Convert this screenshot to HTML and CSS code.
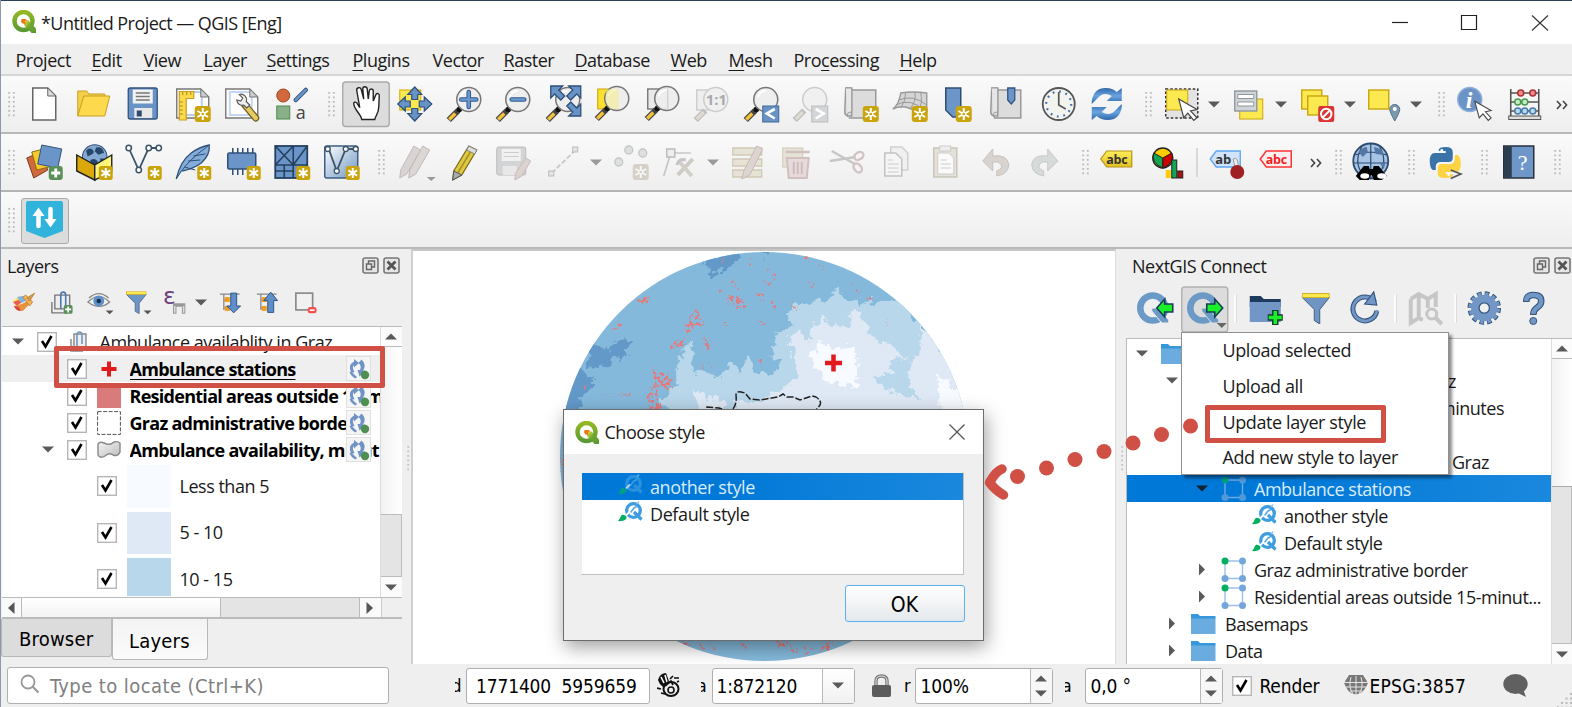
FILE: index.html
```html
<!DOCTYPE html>
<html lang="en">
<head>
<meta charset="utf-8">
<title>*Untitled Project — QGIS [Eng]</title>
<link rel="stylesheet" href="styles.css">
</head>
<body>
<svg class="defs" width="0" height="0">
  <defs>
    <linearGradient id="gq" x1="0" y1="0" x2="0" y2="1"><stop offset="0" stop-color="#93b923"/><stop offset="1" stop-color="#5a9a34"/></linearGradient>
    <linearGradient id="gt" x1="0" y1="0" x2="1" y2="1"><stop offset="0" stop-color="#f0e64a"/><stop offset=".45" stop-color="#6fa52f"/><stop offset="1" stop-color="#5a9a34"/></linearGradient>
    <linearGradient id="gg" x1="0" y1="0" x2="1" y2="1"><stop offset="0" stop-color="#f4f4f4"/><stop offset="1" stop-color="#bdbdbd"/></linearGradient>
    <linearGradient id="gb" x1="0" y1="0" x2="1" y2="1"><stop offset="0" stop-color="#fff"/><stop offset="1" stop-color="#6d96c3"/></linearGradient>
    <linearGradient id="gy" x1="0" y1="0" x2="0" y2="1"><stop offset="0" stop-color="#fdec5a"/><stop offset="1" stop-color="#e3c224"/></linearGradient>
    <linearGradient id="gr" x1="0" y1="0" x2="0" y2="1"><stop offset="0" stop-color="#2f66a8"/><stop offset=".5" stop-color="#6aa5e0"/><stop offset="1" stop-color="#2f66a8"/></linearGradient>
  </defs>
  <symbol id="grip" viewBox="0 0 8 26"><path d="M1.2 1v25M5.800 1v25" stroke="#b9b9b9" stroke-width="1.800" stroke-dasharray="1.800 2.700"/></symbol>
  <symbol id="tri" viewBox="0 0 12 7"><path d="M0 .5h12L6 6.500z" fill="currentColor"/></symbol>
  <symbol id="more" viewBox="0 0 12 10"><path d="M1 1l3.600 4L1 9M7 1l3.600 4L7 9" fill="none" stroke="#444" stroke-width="1.600"/></symbol>
  <symbol id="star" viewBox="-8 -8 16 16" overflow="visible"><rect x="-8" y="-8" width="16" height="16" rx="3" fill="#c9a40c"/><path d="M0-6V6M-5.400-3L5.400 3M-5.400 3L5.400-3" stroke="#fff" stroke-width="2"/><circle r="2.600" fill="#fff"/><circle r="1.300" fill="#c9a40c"/></symbol>
  <symbol id="ast" viewBox="-8 -8 16 16" overflow="visible"><rect x="-7" y="-7" width="14" height="14" rx="2.500" fill="#c9a40c"/><path d="M0-5V5M-4.400-2.600L4.400 2.600M-4.400 2.600L4.400-2.600" stroke="#fff" stroke-width="2"/></symbol>
  <symbol id="lens" viewBox="-18 -18 36 36" overflow="visible"><path d="M-6.500 6.500L-16 16" stroke="#444" stroke-width="6"/><path d="M-9.500 9.500L-15.500 15.500" stroke="#f3c33c" stroke-width="3.400"/><circle cx="-5.500" cy="5.500" r="2.800" fill="#111"/><circle cx="4" cy="-4.500" r="12" fill="#ededed" fill-opacity=".88" stroke="#777" stroke-width="1.500"/><path d="M-4-7a8.500 8.500 0 0 1 8-6" stroke="#fff" stroke-width="2" fill="none"/></symbol>
  <symbol id="lens-off" viewBox="-18 -18 36 36" overflow="visible"><path d="M-6.500 6.500L-16 16" stroke="#bdbdbd" stroke-width="6"/><path d="M-8 8L-15 15" stroke="#dedbd0" stroke-width="3.400"/><circle cx="4" cy="-4.500" r="12" fill="#f0f0f0" stroke="#ccc" stroke-width="1.500"/></symbol>
  <symbol id="q" viewBox="0 0 24 23"><circle cx="11.500" cy="11" r="9" fill="none" stroke="url(#gq)" stroke-width="4.400"/><path d="M12 11.500l4-1.500 8 8.500v4.500h-4.500L12 15z" fill="url(#gt)"/><path d="M9.500 9h4.500l1 1.500-2 .5.500 3-3-.5-1.500-2z" fill="#ee7913"/></symbol>
  <symbol id="tick" viewBox="0 0 20 20"><rect x=".7" y=".7" width="18.600" height="18.600" fill="#fff" stroke="#b6b6b6" stroke-width="1.400"/><path d="M5 9l3.500 5.500L14.500 4" fill="none" stroke="#000" stroke-width="2.600"/></symbol>
  <symbol id="sync" viewBox="0 0 25 25"><rect x=".5" y=".5" width="24" height="24" fill="#f5f5f5" stroke="#e0e0e0"/><path d="M5.500 17Q1 9.500 8 5.500V3l5 4-5 4.500V9Q5.500 11 8.500 16zM12.500 7l3-3.500q5.500 5 1.500 11h2.500l-6 6-2-6.500h2.500q2-4-1.500-7z" fill="#6f93c4"/><path d="M5 15.500l6 5.500-1.500 1.500Q5 20 3.500 16z" fill="#6f93c4"/><circle cx="19" cy="19" r="4.200" fill="#4f8f50"/></symbol>
  <symbol id="undock" viewBox="0 0 17 17"><rect x="1" y="1" width="15" height="15" rx="2" fill="#e6e6e6" stroke="#777" stroke-width="1.600"/><path d="M6.500 7V4h6v6h-3M4.500 7h5v5.500h-5z" fill="none" stroke="#666" stroke-width="1.400"/></symbol>
  <symbol id="shut" viewBox="0 0 17 17"><rect x="1" y="1" width="15" height="15" rx="2" fill="#e6e6e6" stroke="#777" stroke-width="1.600"/><path d="M4.500 4.500l8 8M12.500 4.500l-8 8" stroke="#555" stroke-width="2.800"/></symbol>
  <symbol id="folder" viewBox="0 0 25 20"><path d="M0 0h7l2 2h15.500v3H0z" fill="#3598db"/><path d="M0 4.500h24.500V20H0z" fill="#6aace0"/></symbol>
  <symbol id="vec" viewBox="0 0 25 25"><path d="M4 4h17.500v17.500H4z" fill="none" stroke="#9dc0e6" stroke-width="1.400"/><circle cx="4" cy="4" r="3.500" fill="#00b060"/><circle cx="21.500" cy="4" r="3.500" fill="#74a6db"/><circle cx="4" cy="21.500" r="3.500" fill="#74a6db"/><circle cx="21.500" cy="21.500" r="3.500" fill="#74a6db"/></symbol>
  <symbol id="brush" viewBox="0 0 25 21"><circle cx="15.500" cy="9.500" r="6.800" fill="none" stroke="#3d9de0" stroke-width="3.300"/><path d="M16 11l7.500 7.500" stroke="#3d9de0" stroke-width="3.200"/><path d="M12.500 11.500l3.500-4.500 3-1.500" fill="none" stroke="#5aaae3" stroke-width="1.600"/><path d="M8 14.500l4-4" stroke="#fff" stroke-width="1.800"/><path d="M19 3l2-2.500" stroke="#8fc4ea" stroke-width="1.500"/><path d="M0 20q2-2.500 3-5t5 0q1.500 2-1 4-2.500 1.500-7 1z" fill="#00b060"/></symbol>
  <symbol id="cursor" viewBox="0 0 22 24" overflow="visible"><path d="M0 0l20 11.500-7 1.500 7 7.500-3.500 3-6.500-8-4.500 5z" fill="#fff" stroke="#444" stroke-width="1.300"/></symbol>
  <symbol id="funnel" viewBox="0 0 28 31"><path d="M0 4h28L18 16.500V31l-5.500-3.500V16.500z" fill="#6f95c4" stroke="#41607f"/><rect x=".5" y=".5" width="27" height="4" fill="#fce94f" stroke="#d0b22a"/></symbol>
  <symbol id="globe" viewBox="-18 -18 36 36"><circle r="17" fill="#86a9d3" stroke="#33537a" stroke-width="1.500"/><path d="M-12-9q5-5 9-1t-2 7-5 2zM2-13q8-2 11 7l-8 3-5-5zM-6 4q6-3 9 1t-3 9-6-3zM7 2l6 0-3 8z" fill="#26476c"/></symbol>
</svg>

<div class="window">
  <header class="titlebar">
    <svg class="logo" viewBox="0 0 24 23"><use href="#q"/></svg>
    <span class="title">*Untitled Project — QGIS [Eng]</span>
    <svg class="winbtns" viewBox="0 0 160 20"><path d="M2 10.500h16" stroke="#222" stroke-width="1.200"/><path d="M71.500 3.500h15v14h-15z" fill="none" stroke="#222" stroke-width="1.200"/><path d="M142 3.500l16 15M158 3.500l-16 15" stroke="#333" stroke-width="1.100"/></svg>
  </header>

  <nav class="menubar">
    <span>Pro<u>j</u>ect</span><span><u>E</u>dit</span><span><u>V</u>iew</span><span><u>L</u>ayer</span><span><u>S</u>ettings</span><span><u>P</u>lugins</span><span>Vect<u>o</u>r</span><span><u>R</u>aster</span><span><u>D</u>atabase</span><span><u>W</u>eb</span><span><u>M</u>esh</span><span>Pro<u>c</u>essing</span><span><u>H</u>elp</span>
  </nav>

  <div class="toolbar bar1">
    <div class="grip first"><svg><use href="#grip"/></svg></div>
    <svg class="ic" viewBox="-24.750 -28 49.500 56"><path d="M-11-16H4l8 8V16h-23z" fill="#fff" stroke="#666" stroke-width="1.500"/><path d="M4-16v8h8z" fill="#ddd" stroke="#666"/></svg>
    <svg class="ic" viewBox="-24.750 -28 49.500 56"><path d="M-16 12v-25h9l2 3h16v8" fill="#f6cf4a" stroke="#c79f22"/><path d="M-16 12l6-20h26l-5 20z" fill="#fdd94e" stroke="#c79f22"/></svg>
    <svg class="ic" viewBox="-24.750 -28 49.500 56"><rect x="-14.500" y="-16" width="29" height="31" rx="2" fill="#6893c6" stroke="#33537a" stroke-width="1.300"/><rect x="-10" y="-14.500" width="20" height="14" fill="#f2f2f2"/><path d="M-7-11H7M-7-7.500H7M-7-4H7" stroke="#777" stroke-width="1.300"/><rect x="-8.500" y="4" width="18" height="10" fill="#e8e8e8"/><rect x="-6" y="6.500" width="5" height="6" fill="#2e4a6c"/></svg>
    <svg class="ic" viewBox="-24.750 -28 49.500 56"><path d="M-16-15H8l8 8V14h-32z" fill="#fff" stroke="#777" stroke-width="1.400"/><path d="M-13-12h22v23h-22" fill="none" stroke="#b9ccf2" stroke-width="2"/><path d="M8-15v8h8z" fill="#ccc" stroke="#777"/><path d="M-13.500-12.500H1v7h-7.500V16h-7z" fill="#fcd949" stroke="#c79f22" stroke-width="1.200"/><path d="M-13-2h3M-13 2h3M-13 6h3M-13 10h3M-10-12v3M-6-12v3M-2-12v3" stroke="#a8861a"/><use href="#star" x="2" y="2" width="16" height="16"/></svg>
    <svg class="ic" viewBox="-24.750 -28 49.500 56"><path d="M-16-15H8l8 8V14h-32z" fill="#fff" stroke="#777" stroke-width="1.400"/><path d="M-12-12h22v23h-22z" fill="none" stroke="#c5d5f4" stroke-width="2"/><path d="M8-15v8h8z" fill="#ccc" stroke="#777"/><path d="M3 1L14 14" stroke="#6b5a20" stroke-width="7" stroke-linecap="round"/><path d="M4 2l10 12" stroke="#e5ca62" stroke-width="4.500" stroke-linecap="round"/><path d="M-5-4a5.500 5.500 0 0 0 7 5l3 3 3-3-3.500-3.500a5.500 5.500 0 0 0-7-7l3.500 3.500-2 3z" fill="#eee" stroke="#555" stroke-width="1.100"/></svg>
    <svg class="ic" viewBox="-24.750 -28 49.500 56"><circle cx="-8.500" cy="-8.500" r="6.500" fill="#d2693c" stroke="#a04420"/><path d="M4-4L14-14" stroke="#33537a" stroke-width="4.500" stroke-linecap="round"/><path d="M4-4L14-14" stroke="#6893c6" stroke-width="2.500" stroke-linecap="round"/><rect x="-15" y="2" width="13" height="13" fill="#89b088" stroke="#4d8a50"/><text class="glyph" x="4" y="14.500" font-size="18" fill="#444">a</text></svg>
    <div class="grip g1"><svg><use href="#grip"/></svg></div>
    <svg class="ic" viewBox="-24.750 -28 49.500 56"><rect x="-23" y="-22" width="46.500" height="44.500" rx="3" fill="#dcdcdc" stroke="#aaa" stroke-width="1.400"/><path d="M-4 15.500c-1-6-8-10-8-16 0-2 3-2 4 1l2 3-3-17c-.5-3 3.500-4 4.500-1L-2-5-3-15c0-3 4-3 4.500 0L2.500-5 3.500-13c.5-3 4-2.500 4 0V-3l2.500-6c1-2.500 4-1.500 3.500 1L13 3c0 6-3 8-4 12.500z" fill="#fff" stroke="#222" stroke-width="1.400"/></svg>
    <svg class="ic" viewBox="-24.750 -28 49.500 56"><rect x="-15" y="-14" width="21" height="20" fill="#fce94f" stroke="#d0a800"/><path d="M0-17l7 7.500H3v5h-6v-5h-4zM0 17l7-7.500H3v-5h-6v5h-4zM-17 0l7.500-7v4h5v6h-5v4zM17 0l-7.500-7v4h-5v6h5v4z" fill="#6893c6" stroke="#2e4f78" stroke-width="1.200"/></svg>
    <svg class="ic" viewBox="-24.750 -28 49.500 56"><use href="#lens" x="-18" y="-18" width="36" height="36"/><path d="M4-12v15M-3.500-4.500h15" stroke="#2f5a90" stroke-width="4.600" stroke-linecap="round"/><path d="M4-12v15M-3.500-4.500h15" stroke="#6b98cc" stroke-width="2.600" stroke-linecap="round"/></svg>
    <svg class="ic" viewBox="-24.750 -28 49.500 56"><use href="#lens" x="-18" y="-18" width="36" height="36"/><path d="M-2-4.500H10.500" stroke="#2f5a90" stroke-width="4.600" stroke-linecap="round"/><path d="M-2-4.500H10.500" stroke="#6b98cc" stroke-width="2.600" stroke-linecap="round"/></svg>
    <svg class="ic" viewBox="-24.750 -28 49.500 56"><use href="#lens" x="-18" y="-18" width="36" height="36"/><path d="M-13-18h12l-4 4 6 6-4 4-6-6-4 4zM17-18H5l4 4-6 6 4 4 6-6 4 4zM17 12H5l4-4-6-6 4-4 6 6 4-4z" fill="#6893c6" stroke="#2e4f78" stroke-width="1.300"/></svg>
    <svg class="ic" viewBox="-24.750 -28 49.500 56"><rect x="-15" y="-15" width="20" height="20" fill="#fce02e" stroke="#c79f00"/><use href="#lens" x="-18" y="-19" width="36" height="36"/><path d="M-6-14.500h12v19h-9q-6-8-3-19z" fill="#f3efa4" opacity=".7"/></svg>
    <svg class="ic" viewBox="-24.750 -28 49.500 56"><rect x="-15" y="-15" width="20" height="20" fill="#e9e9e9" stroke="#777" stroke-width="1.400"/><use href="#lens" x="-18" y="-19" width="36" height="36"/><path d="M5-14v20" stroke="#ccc"/></svg>
    <svg class="ic" viewBox="-24.750 -28 49.500 56"><rect x="-15" y="-14" width="20" height="20" fill="#eee" stroke="#ccc" stroke-width="1.400"/><use href="#lens-off" x="-18" y="-18" width="36" height="36"/><text class="glyph bold" x="-6" y="1" font-size="15" fill="#aaa">1:1</text></svg>
    <svg class="ic" viewBox="-24.750 -28 49.500 56"><use href="#lens" x="-18" y="-18" width="36" height="36"/><rect x="1" y="2" width="16" height="16" fill="#6893c6" stroke="#3f6797"/><path d="M13 5L5 9.500 13 14.500" fill="none" stroke="#fff" stroke-width="2.600"/></svg>
    <svg class="ic" viewBox="-24.750 -28 49.500 56"><use href="#lens-off" x="-18" y="-18" width="36" height="36"/><rect x="1" y="2" width="16" height="16" fill="#d3d6d9" stroke="#bbb"/><path d="M5 5l8 4.500-8 5" fill="none" stroke="#fff" stroke-width="2.600"/></svg>
    <svg class="ic" viewBox="-24.750 -28 49.500 56"><path d="M-15-16h6v28h-4q-3-1-3-4zM-9-14h24v28h-27" fill="#dcdcdc" stroke="#999" stroke-width="1.500"/><path d="M-15-16h6v24q-6 0-4 5" fill="#e6e6e6" stroke="#999"/><use href="#star" x="2" y="2" width="16" height="16"/></svg>
    <svg class="ic" viewBox="-24.750 -28 49.500 56"><path d="M-17 5q6-4 8-16 12-2 26 0v18q-12 0-18-3-8-3-16 1z" fill="#d5d5d5" stroke="#999" stroke-width="1.400"/><path d="M-11-4q14-6 28 5M-14 1q14-8 30 6M-4-12Q-4-3-9 4M5-12q2 8-4 16M11-12q2 12-2 18" stroke="#999" fill="none"/><use href="#star" x="2" y="2" width="16" height="16"/></svg>
    <svg class="ic" viewBox="-24.750 -28 49.500 56"><path d="M-14-16H1V8l-5 5h-3l-7-7z" fill="#6c96c8" stroke="#2f4d74" stroke-width="1.500"/><use href="#star" x="-4" y="2" width="16" height="16"/></svg>
    <svg class="ic" viewBox="-24.750 -28 49.500 56"><path d="M-17-16h6v28h-4q-3-1-3-4zM-11-14h23v28h-27" fill="#dcdcdc" stroke="#999" stroke-width="1.500"/><path d="M-17-16h6v24q-6 0-4 5" fill="#e6e6e6" stroke="#999"/><path d="M-1-16h7v12l-3.500 4L-1-4z" fill="#6c96c8" stroke="#2f5484" stroke-width="1.300"/></svg>
    <svg class="ic" viewBox="-24.750 -28 49.500 56"><circle r="16" fill="#f3f3f0" stroke="#555" stroke-width="1.800"/><circle r="12.500" fill="none" stroke="#3e6da8" stroke-width="2.200" stroke-dasharray="1.800 4.745"/><path d="M0-12V1l7 4" fill="none" stroke="#555" stroke-width="1.700"/></svg>
    <svg class="ic" viewBox="-24.750 -28 49.500 56"><path d="M-16-3q2-13 14-13 7 0 11 4l5-4v13H-1l5-5q-8-5-14 2l-6 6z" fill="url(#gr)"/><path d="M14 3q-2 13-14 13-7 0-11-4l-5 4V3H-1l-5 5q8 5 14-2l6-6z" fill="url(#gr)"/></svg>
    <div class="grip g2"><svg><use href="#grip"/></svg></div>
    <svg class="ic" viewBox="-24.750 -28 49.500 56"><rect x="-16" y="-15" width="32" height="29" fill="#e3e3e3" stroke="#333" stroke-width="1.500" stroke-dasharray="2.500 2"/><rect x="-15" y="-14" width="21" height="20" fill="#fce94f" stroke="#c9a40c"/><use href="#cursor" x="-3" y="-5" width="20" height="22"/></svg>
    <div class="drop d1"><svg><use href="#tri"/></svg></div>
    <svg class="ic" viewBox="-24.750 -28 49.500 56"><rect x="-9" y="-5" width="23" height="20" fill="#fce94f" stroke="#c9a40c"/><rect x="-14" y="-13" width="22" height="20" fill="#cfd4d6" stroke="#8e979e" stroke-width="1.400"/><path d="M-11-9.500H5v4h-16zM-11-2H5v4h-16z" fill="#fff" stroke="#8e979e"/></svg>
    <div class="drop d2"><svg><use href="#tri"/></svg></div>
    <svg class="ic" viewBox="-24.750 -28 49.500 56"><rect x="-16" y="-14" width="20" height="19" fill="#fce94f" stroke="#c9a40c" stroke-width="1.400"/><rect x="-10" y="-8" width="20" height="19" fill="#fce94f" stroke="#c9a40c" stroke-width="1.400"/><rect x=".5" y="2" width="16" height="16" rx="2" fill="#d93535"/><circle cx="8.500" cy="10" r="5.200" fill="none" stroke="#fff" stroke-width="2"/><path d="M5 13.500L12 6.500" stroke="#fff" stroke-width="2"/></svg>
    <div class="drop d3"><svg><use href="#tri"/></svg></div>
    <svg class="ic" viewBox="-24.750 -28 49.500 56"><rect x="-15" y="-14" width="20" height="19" fill="#fce94f" stroke="#c9a40c" stroke-width="1.400"/><path d="M11 17q-5-9-5-11.500a5 5 0 0 1 10 0Q16 8 11 17z" fill="#7a98ae" stroke="#52748e"/><circle cx="11" cy="5" r="2" fill="#fff"/></svg>
    <div class="drop d4"><svg><use href="#tri"/></svg></div>
    <div class="grip g3"><svg><use href="#grip"/></svg></div>
    <svg class="ic" viewBox="-24.750 -28 49.500 56"><circle cx="-5" cy="-4.500" r="12" fill="#6b93c6" stroke="#8fb0da" stroke-width="1.500"/><text class="info" x="-9" y="3.500" font-size="24">i</text><use href="#cursor" x="0" y="-3" width="18" height="20"/></svg>
    <svg class="ic" viewBox="-24.750 -28 49.500 56"><path d="M-14-15v27M14-15v27M-14-11h28M-14-2h28M-14 7h28" stroke="#555" stroke-width="1.600"/><rect x="-16" y="12" width="32" height="3.500" fill="#ddd" stroke="#555"/><g stroke="#a33" fill="#f08a8a" stroke-width="1.500"><circle cx="-4" cy="-11" r="3"/><circle cx="8" cy="-11" r="3"/></g><g stroke="#4a9a4f" fill="#c6ecc6" stroke-width="1.500"><circle cx="-7" cy="-2" r="3"/><circle cy="-2" r="3"/></g><g stroke="#4a7aa8" fill="#b7daf3" stroke-width="1.500"><circle cx="-7" cy="7" r="3"/><circle cx="0" cy="7" r="3"/><circle cx="8" cy="7" r="3"/></g></svg>
    <svg class="more"><use href="#more"/></svg>
  </div>

  <div class="toolbar bar2">
    <div class="grip first"><svg><use href="#grip"/></svg></div>
    <svg class="ic" viewBox="-25.750 -28 49.500 56"><path d="M-18-4l14-6 7 18-14 8z" fill="#d2693c" stroke="#7a3c1c"/><path d="M-13-10l16-4 5 18-16 4z" fill="#f6ca2c" stroke="#8a6d12"/><path d="M-3-17l20 4-4 19-20-4z" fill="#6b95c8" stroke="#33537a"/><rect x="4" y="4" width="14" height="14" rx="3" fill="#5a8f5a"/><path d="M11 6.500v9M6.500 11h9" stroke="#fff" stroke-width="2.800"/></svg>
    <svg class="ic" viewBox="-25.750 -28 49.500 56"><use href="#globe" x="-13" y="-18" width="26" height="26"/><path d="M-18-7L0 3v15l-18-9z" fill="#dba80c" stroke="#222" stroke-width="1.400"/><path d="M17-7L0 3v15l17-9z" fill="#fdf47c" stroke="#222" stroke-width="1.400"/><use href="#ast" x="3" y="3" width="16" height="16"/></svg>
    <svg class="ic" viewBox="-25.750 -28 49.500 56"><path d="M-15-14L-5 8 5-14H15" fill="none" stroke="#3c5468" stroke-width="1.800"/><g fill="#fff" stroke="#3c5468" stroke-width="1.500"><circle cx="-15" cy="-14" r="2.700"/><circle cx="-5" cy="8" r="2.700"/><circle cx="5" cy="-14" r="2.700"/><circle cx="15" cy="-14" r="2.700"/></g><use href="#ast" x="3" y="3" width="16" height="16"/></svg>
    <svg class="ic" viewBox="-25.250 -28 49.500 56"><path d="M-17 17q4-18 15-26 8-6 18-8 1 10-8 18-8 6-19 8" fill="#83acd8" stroke="#2f5078" stroke-width="1.300"/><path d="M-17 17Q-8 0 16-17M-9 5l11 3M-5-1l12-1M0-6l12-2" stroke="#2f5078" fill="none"/><use href="#ast" x="3" y="3" width="16" height="16"/></svg>
    <svg class="ic" viewBox="-25.750 -28 49.500 56"><path d="M-10-14v7M-5-14v7M0-14v7M5-14v7M10-14v7M-10 7v6M-5 7v6M0 7v6" stroke="#2f4f76" stroke-width="1.500"/><rect x="-15" y="-9" width="28" height="16" rx="1.500" fill="#6b95c8" stroke="#2f5078" stroke-width="1.500"/><use href="#ast" x="3" y="3" width="16" height="16"/></svg>
    <svg class="ic" viewBox="-25.250 -28 49.500 56"><rect x="-17" y="-16" width="32" height="32" fill="#6b95c8" stroke="#24405f" stroke-width="1.800"/><path d="M-17-16L1 3M1-16L-17 3M15-16L1 3M1-16V16M-17 3h32M-8 3v13M-17 9H1" stroke="#24405f" stroke-width="1.600" fill="none"/><use href="#ast" x="3" y="3" width="16" height="16"/></svg>
    <svg class="ic" viewBox="-25.750 -28 49.500 56"><rect x="-17" y="-16" width="33" height="32" rx="2" fill="url(#gb)" stroke="#3f5d80" stroke-width="1.500"/><path d="M-13-13L-5 9 4-13H14" fill="none" stroke="#3c5468" stroke-width="1.800"/><g fill="#fff" stroke="#3c5468" stroke-width="1.300"><circle cx="-14" cy="-13" r="2.500"/><circle cx="-5" cy="9" r="2.500"/><circle cx="4" cy="-13" r="2.500"/><circle cx="14" cy="-13" r="2.500"/></g><use href="#ast" x="3" y="3" width="16" height="16"/></svg>
    <div class="grip g4"><svg><use href="#grip"/></svg></div>
    <svg class="ic" viewBox="-24.750 -28 49.500 56"><path d="M-1-16l7 4L-8 12l-7 4 1-8z" fill="#d9d3d3" stroke="#c4bcbc"/><path d="M8-16l7 4L1 12l-7 4 1-8z" fill="#dcd6d4" stroke="#c0b8b8"/><path d="M12 15h9l-4.500 4z" fill="#999"/></svg>
    <svg class="ic" viewBox="-24.750 -28 49.500 56"><path d="M4-16l8 4L-3 13l-9 5 1-9z" fill="#e0c93e" stroke="#7a6a1a" stroke-width="1.200"/><path d="M8-14L-7 11" stroke="#a3912c" stroke-width="1.500"/><path d="M4-16l8 4-2 4-8-4z" fill="#ddd" stroke="#888"/><path d="M-11 9l8 4-9 5z" fill="#aaa" stroke="#555"/></svg>
    <svg class="ic" viewBox="-24.750 -28 49.500 56"><rect x="-17" y="-15" width="29" height="28" rx="2" fill="#d2d4d6" stroke="#bbb"/><rect x="-12" y="-13" width="19" height="12" fill="#f1f1f1"/><path d="M-10-9.500H5M-10-5.500H5" stroke="#ccc"/><rect x="-11" y="4" width="14" height="9" fill="#e8e8e8"/><path d="M12-4l5 3L8 14l-7 4 1-7z" fill="#dcd2d0" stroke="#c7bdbb"/></svg>
    <svg class="ic" viewBox="-24.750 -28 49.500 56"><path d="M-12 11L12-12" stroke="#c6c6c6" stroke-width="1.700" stroke-dasharray="5 2"/><rect x="-15" y="9" width="5" height="5" fill="#e4e4e4" stroke="#bbb"/><rect x="9" y="-15" width="5" height="5" fill="#e4e4e4" stroke="#bbb"/></svg>
    <div class="drop e1"><svg><use href="#tri"/></svg></div>
    <svg class="ic" viewBox="-24.750 -28 49.500 56"><g fill="#dde0dd" stroke="#c2c6c2" stroke-width="1.300"><circle cx="-2" cy="-12" r="4"/><circle cx="12" cy="-9" r="4"/><circle cx="-12" cy="0" r="4"/></g><g class="faded"><use href="#star" x="2" y="2" width="16" height="16"/></g></svg>
    <svg class="ic" viewBox="-24.750 -28 49.500 56"><path d="M-10-9l-7 23M-10-9h20" stroke="#c6c6c6" stroke-width="1.700"/><rect x="-14" y="-13" width="8" height="8" fill="#eee" stroke="#bbb" stroke-width="1.500"/><path d="M12-3L-3 13" stroke="#cecbc4" stroke-width="4"/><path d="M-2-1l13 15" stroke="#d2cfc8" stroke-width="4"/><path d="M-4 3q2-7 9-5" stroke="#c4c4c4" stroke-width="3" fill="none"/></svg>
    <div class="drop e2"><svg><use href="#tri"/></svg></div>
    <svg class="ic" viewBox="-24.750 -28 49.500 56"><path d="M-15-14h29v7h-29zM-15-3h29v7h-29zM-15 8h29v7h-29z" fill="#e6e3d6" stroke="#cfc9b4" stroke-width="1.300"/><path d="M9-16l6 3L2 13l-8 4 2-8z" fill="#ddd4d2" stroke="#c5bcba"/></svg>
    <svg class="ic" viewBox="-24.750 -28 49.500 56"><rect x="-15" y="-14" width="20" height="19" fill="#e6e3d6" stroke="#cfc9b4"/><path d="M-12-10h24" stroke="#d2bfc0" stroke-width="2.500"/><path d="M-11-4h22l-2 20H-9z" fill="#e6dadb" stroke="#d2bfc0" stroke-width="2"/><path d="M-4 0v12M0 0v12M4 0v12" stroke="#cdb8ba" stroke-width="1.800"/></svg>
    <svg class="ic" viewBox="-24.750 -28 49.500 56"><path d="M-15-11L8 2M-17-1L9-5" stroke="#c6c6c6" stroke-width="2.400"/><ellipse cx="12" cy="-6" rx="5" ry="3.500" fill="none" stroke="#d2c3c5" stroke-width="2.400" transform="rotate(-30 12 -6)"/><ellipse cx="11" cy="6" rx="5" ry="3.500" fill="none" stroke="#d2c3c5" stroke-width="2.400" transform="rotate(50 11 6)"/></svg>
    <svg class="ic" viewBox="-24.750 -28 49.500 56"><path d="M-6-15H5l6 6V8H-6z" fill="#f0f0f0" stroke="#cfcfcf" stroke-width="1.500"/><path d="M-12-9H-1l6 6v17h-17z" fill="#f5f5f5" stroke="#c2c2c2" stroke-width="1.500"/><path d="M-9-2h5M-9 2H2M-9 6H2M-9 10H2" stroke="#ccc"/></svg>
    <svg class="ic" viewBox="-24.750 -28 49.500 56"><rect x="-12" y="-14" width="23" height="29" fill="#e4e1d8" stroke="#c9c5b8" stroke-width="1.500"/><path d="M-8-9H3l5 5v16H-8z" fill="#fafafa" stroke="#ccc"/><rect x="-6" y="-16" width="11" height="5" fill="#eee" stroke="#ccc"/><path d="M-5-2h6M-5 2H5M-5 6H5" stroke="#ccc"/></svg>
    <svg class="ic" viewBox="-24.750 -28 49.500 56"><path d="M-13-1L-3-13v7q14-2 16 8 0 10-12 12v-5q7-3 4-7-2-3-8-2v9z" fill="#d9d3cf" stroke="#c9c2bd"/></svg>
    <svg class="ic" viewBox="-24.750 -28 49.500 56"><path d="M13-1L3-13v7q-14-2-16 8 0 10 12 12v-5q-7-3-4-7 2-3 8-2v9z" fill="#d6dad8" stroke="#c5c9c7"/></svg>
    <div class="grip g5"><svg><use href="#grip"/></svg></div>
    <svg class="ic" viewBox="-24.750 -28 49.500 56"><path d="M-15-3l6-8h25V5H-9z" fill="url(#gy)" stroke="#b3941a" stroke-width="1.200"/><text class="glyph bold" x="-9.500" y="1.500" font-size="12.500" fill="#333">abc</text></svg>
    <svg class="ic" viewBox="-24.750 -28 49.500 56"><circle cx="-3" cy="-4" r="10" fill="#fc0" stroke="#222" stroke-width="1.300"/><path d="M-3-4l-9-5q-3 10 9 15z" fill="#13a555" stroke="#222"/><path d="M-3-4l9-5q4 10-9 15z" fill="#c00" stroke="#222"/><rect x="0" y="8" width="5" height="8" fill="#fc0"/><rect x="6" y="-2" width="5" height="18" fill="#13a555" stroke="#222"/><rect x="12" y="9" width="5" height="7" fill="#a11" stroke="#222"/></svg>
    <div class="sep s1"></div>
    <svg class="ic" viewBox="-24.250 -28 49.500 56"><path d="M-16-3l6-8h24V5h-24z" fill="#cfe4fb" stroke="#5da4ee" stroke-width="1.300"/><text class="glyph bold" x="-11" y="2" font-size="13" fill="#333">ab</text><path d="M7-3q3-2 4 1l2 9H9z" fill="#eee" stroke="#999"/><circle cx="11" cy="10" r="7" fill="#a02124"/></svg>
    <svg class="ic" viewBox="-23.250 -28 49.500 56"><path d="M-15-3l6-8h25V5H-9z" fill="#fee" stroke="#f33" stroke-width="1.500"/><text class="glyph bold" x="-9.500" y="1.500" font-size="12.500" fill="#e22">abc</text></svg>
    <svg class="more m2"><use href="#more"/></svg>
    <div class="grip g6"><svg><use href="#grip"/></svg></div>
    <svg class="ic" viewBox="-24.750 -28 49.500 56"><circle cy="-1" r="17.500" fill="#a8c4e4" stroke="#2d4b70" stroke-width="1.800"/><path d="M0-18V16M-16-7q16-6 32 0M-17 1H17M-9-15q-8 14 0 26M9-15q8 14 0 26" fill="none" stroke="#2d4b70" stroke-width="1.200"/><path d="M-12-10q4-5 8-5l1 5-5 5zM3-15q9 1 10 8l-8-1zM9 1l6-1-2 7z" fill="#5478a6"/><path d="M-7 4h5l1 3h3l1-3h5l8 10-5 4H3l-2-5h-1l-2 5h-9l-4-4z" fill="#000"/><ellipse cx="-6" cy="14" rx="4.500" ry="2.800" fill="#fff"/><ellipse cx="11" cy="14" rx="4.500" ry="2.800" fill="#fff"/></svg>
    <div class="grip g7"><svg><use href="#grip"/></svg></div>
    <svg class="ic" viewBox="-24.750 -28 49.500 56"><path d="M0-15q7 0 7 5v6q0 4-4 4h-8q-5 0-5 5v3h-3q-3-2-3-9 0-8 5-8H0v-2h-7v-1q0-3 7-3z" fill="#3973a8"/><path d="M-1 16q-7 0-7-4V6q0-4 4-4h8q5 0 5-5v-4h3q3 2 3 9 0 7-4 8H0v2h7v1q0 3-8 3z" fill="#fdd243"/><circle cx="-4" cy="-11.500" r="1.400" fill="#fff"/><circle cx="3" cy="12.500" r="1.400" fill="#fff"/><path d="M5 8l10 4-10 4.500" fill="none" stroke="#555" stroke-width="1.800"/></svg>
    <div class="grip g8"><svg><use href="#grip"/></svg></div>
    <svg class="ic" viewBox="-24.750 -28 49.500 56"><rect x="-14" y="-16" width="30" height="32" fill="#6f96c8" stroke="#27313d" stroke-width="1.500"/><rect x="-14" y="-16" width="8" height="32" fill="#2c3e50"/><text class="serif" x="0" y="8" font-size="22" fill="#fff">?</text></svg>
    <div class="grip g9"><svg><use href="#grip"/></svg></div>
  </div>

  <div class="toolbar bar3">
    <div class="grip first"><svg><use href="#grip"/></svg></div>
    <div class="connect"><svg viewBox="0 0 37 37"><path d="M0 2q0-2 2-2h33q2 0 2 2v28l-18.500 7L0 30z" fill="#31b4dc"/><path d="M12.500 25V13M24.500 8v12" stroke="#fff" stroke-width="4.500" stroke-linecap="round"/><path d="M6.500 15l6-8.500 6 8.500zM18.500 18l6 8.500 6-8.500z" fill="#fff"/></svg></div>
  </div>

  <main class="work">
    <section class="panel left">
      <div class="head"><span>Layers</span><svg class="hb"><use href="#undock"/></svg><svg class="hb"><use href="#shut"/></svg></div>
      <div class="ptools">
        <svg class="pi" viewBox="-19 -20 38 40"><path d="M-11-2l7-5 4 5-6 5z" fill="#f8e45c"/><path d="M-11-1l4 4 5-4-3-2z" fill="#ee5a50"/><path d="M-7-6l6-1 4 4-5 3z" fill="#7cb4ea"/><path d="M-10 3l8-2 8-4 1 3-8 8q-5 0-9-5z" fill="#e9913e"/><path d="M-10 3l5 1 2 4q-5 0-7-5z" fill="#d9403c"/><path d="M-1-6l3-2 7 7-3 4z" fill="#f0b45c" stroke="#b97a26" stroke-width=".8"/><path d="M3-5l8-5-5 8z" fill="#d79a4a" stroke="#b97a26" stroke-width=".8"/></svg>
        <svg class="pi" viewBox="-19 -20 38 40"><path d="M-10-1v11H6M-7-4V6H8V-8H-7z" fill="#eee" stroke="#777" stroke-width="1.400"/><path d="M-1 6v-14q0-3 2.500-3t2.500 3V4" fill="none" stroke="#4778ae" stroke-width="1.600"/><rect x="2" y="2" width="9" height="9" rx="2" fill="#5a8f5a"/><path d="M6.500 3.500v6M3.500 6.500h6" stroke="#fff" stroke-width="1.800"/></svg>
        <svg class="pi" viewBox="-20 -20 38 40"><path d="M-12-1Q-1-12 10-1 0 8-12-1zM-11-5Q-1-14 9-5" fill="#eee" stroke="#888" stroke-width="1.300"/><circle cx="-1" cy="-2" r="5.500" fill="#5f8fc9"/><circle cx="-1" cy="-2" r="2.300" fill="#18304f"/><path d="M6 7.500h8l-4 4z" fill="#555"/></svg>
        <svg class="pi" viewBox="-20 -20 38 40"><use href="#funnel" x="-12" y="-12" width="21" height="23"/><path d="M6 7.500h8l-4 4z" fill="#555"/></svg>
        <svg class="pi" viewBox="-21 -20 38 40"><text class="eps" x="-13" y="1" font-size="24">ε</text><path d="M-1 11V2h9v9" fill="none" stroke="#999" stroke-width="3.500"/><path d="M-1 10V3M8 10V3" stroke="#ddd" stroke-width="1.500"/></svg>
        <div class="drop p1"><svg><use href="#tri"/></svg></div>
        <svg class="pi" viewBox="-20 -20 38 40"><path d="M-11-9H9M-7-9V7M-7-3h4M-7 5h4" stroke="#888" stroke-width="1.300"/><rect x="-6" y="-6" width="5" height="5" fill="#f29b1d"/><rect x="-6" y="3" width="5" height="5" fill="#f29b1d"/><path d="M0-10h6V3h4L3 10-4 3h4z" fill="#5f8fc9" stroke="#2e5484"/></svg>
        <svg class="pi" viewBox="-20 -20 38 40"><path d="M-11-9H9M-7-9V7M-7-3h4M-7 5h4" stroke="#888" stroke-width="1.300"/><rect x="-6" y="-6" width="5" height="5" fill="#f29b1d"/><rect x="-6" y="3" width="5" height="5" fill="#f29b1d"/><path d="M0 9.500h6v-12h4L3-11-4-2.500h4z" fill="#5f8fc9" stroke="#2e5484"/></svg>
        <svg class="pi" viewBox="-20 -20 38 40"><rect x="-10" y="-10" width="17" height="17" fill="#f1f1f1" stroke="#8a8a8a" stroke-width="1.700"/><rect x="2" y="4" width="9" height="6.500" rx="2.500" fill="#f05050"/><path d="M4 7.300h5" stroke="#fff" stroke-width="1.600"/></svg>
      </div>
      <div class="treebox">
        <div class="ltree">
          <div class="row l0"><svg class="exp"><use href="#tri"/></svg><svg class="cb"><use href="#tick"/></svg><svg class="sym" viewBox="0 0 24 22"><path d="M4 8v12h12M7 5v12h12V3H7z" fill="#eee" stroke="#888" stroke-width="1.400"/><path d="M10 15V4q0-3 2.500-3T15 4v9" fill="none" stroke="#7098c4" stroke-width="1.600"/></svg><span class="name">Ambulance availablity in Graz</span></div>
          <div class="row l1 cur"><svg class="cb"><use href="#tick"/></svg><svg class="sym" viewBox="0 0 24 24"><path d="M12 4.500v15M4.500 12h15" stroke="#e31a1c" stroke-width="4"/></svg><span class="name b"><u>Ambulance stations</u></span><svg class="sy"><use href="#sync"/></svg></div>
          <div class="row l1"><svg class="cb"><use href="#tick"/></svg><svg class="sym" viewBox="0 0 24 24"><rect width="24" height="24" fill="#d97b7b"/></svg><span class="name b">Residential areas outside 15-min</span><svg class="sy"><use href="#sync"/></svg></div>
          <div class="row l1"><svg class="cb"><use href="#tick"/></svg><svg class="sym" viewBox="0 0 24 24"><rect x=".6" y=".6" width="22.800" height="22.800" fill="#fff" stroke="#555" stroke-dasharray="4 1.500"/></svg><span class="name b">Graz administrative border</span><svg class="sy"><use href="#sync"/></svg></div>
          <div class="row l1 open"><svg class="exp"><use href="#tri"/></svg><svg class="cb"><use href="#tick"/></svg><svg class="sym" viewBox="0 0 24 24"><path d="M1 6q2-3 6-1 6 3 10-1 4-1 6 1v9q-2 5-7 3-4-3-8 1-5 3-7-1z" fill="url(#gg)" stroke="#888" stroke-width="1.400"/></svg><span class="name b">Ambulance availability, minut</span><svg class="sy"><use href="#sync"/></svg></div>
          <div class="leg"><svg class="cb"><use href="#tick"/></svg><i class="sw c1"></i><span>Less than 5</span></div>
          <div class="leg"><svg class="cb"><use href="#tick"/></svg><i class="sw c2"></i><span>5 - 10</span></div>
          <div class="leg"><svg class="cb"><use href="#tick"/></svg><i class="sw c3"></i><span>10 - 15</span></div>
        </div>
        <div class="vs"><div class="sb up"><svg><use href="#tri"/></svg></div><div class="thumb"></div><div class="track"></div><div class="sb"><svg><use href="#tri"/></svg></div></div>
      </div>
      <div class="hs"><div class="hb2"><svg viewBox="0 0 7 12"><path d="M6.500 0v12L0 6z" fill="#555"/></svg></div><div class="hthumb"></div><div class="htrack"></div><div class="hb2 r"><svg viewBox="0 0 7 12"><path d="M.5 0v12L7 6z" fill="#555"/></svg></div><div class="corner"></div></div>
      <div class="tabs"><div class="tab">Browser</div><div class="tab on">Layers</div></div>
      <svg class="splitdots s-left"><use href="#grip"/></svg>
    </section>

    <section class="canvas">
      <svg class="map" viewBox="413 251 703 410">
        <defs>
          <clipPath id="disc"><circle cx="764.500" cy="456.500" r="204.500"/></clipPath>
          <filter id="rag" x="-5%" y="-5%" width="110%" height="110%"><feTurbulence type="fractalNoise" baseFrequency=".13" numOctaves="3" seed="4"/><feDisplacementMap in="SourceGraphic" scale="15" xChannelSelector="R" yChannelSelector="G"/></filter>
          <filter id="spk" x="-5%" y="-5%" width="110%" height="110%"><feTurbulence type="fractalNoise" baseFrequency=".3" numOctaves="2" seed="9" result="n"/><feDisplacementMap in="SourceGraphic" in2="n" scale="9" xChannelSelector="R" yChannelSelector="G" result="d"/><feColorMatrix in="n" type="matrix" values="0 0 0 0 0  0 0 0 0 0  0 0 0 0 0  0 0 14 0 -6.600" result="m"/><feComposite in="d" in2="m" operator="in"/></filter>
        </defs>
        <g clip-path="url(#disc)">
          <rect x="555" y="248" width="420" height="415" fill="#85b9db"/>
          <g filter="url(#rag)">
            <path fill="#6299c9" d="M700 262l40-14-3 15-16 6-8 9-4-10zM590 340l14 10 12-8 12-2v21l-13-3-6 6-24 5zM582 371l12 8-6 14-8 4v14h-30l18-50zM762 250h8l-3 8z"/>
            <path fill="#b8d7ea" d="M688 340l9 10-6 12 3 12 13-5 10 10 8-8 7-9 9 10 7-18 5 20h22l5-14-8-5 4-20 16-9-5-14 19-12 20 1 12-12 7 10 20 6 6-5 18 3 10-2 110 120H663l7-10-10-10 17-16-1-16z"/>
            <path fill="#dfe9f5" d="M783 388l14-10-7-40 8-11 11 16 4-18 9-11 5 13 23-4 3-14 14 13 6 16 24 9 4 9 12 4 9-13-3-24 80 100H733l4-22 16 4zM693 387l14 13 13-3 5 15h-26l-2-12z"/>
            <path fill="#b8d7ea" d="M888 356l23 4-2 20 10 20-30-9-16-14 18-3zM900 312l18 16-2 24-14 3-10-13-22-8-8-16z"/>
            <path fill="#f7fbff" d="M822 343l12 6 22-3 1 42-29-6-12-12-7-14zM937 376l24 14 6 22h-26z"/>
          </g>
          <g filter="url(#spk)" fill="#e47a7c">
            <path d="M638 297l12 1 0 5-8 1zM612 330l9-8v3l-8 8zM686 325l6-10 5-7 7 20-8-4-6 8-6 0zM670 345l13-6v8l-10 2zM726 297l8-2 10 5 4 7-14 1zM730 279l7 4 2 6-6-2zM755 295l8-2 1 9-5-3zM762 281l8 0 1 6zM702 338l6 0 2 12-4-2zM651 368l8 4 14 6-3 12-12-3-1 12 5 12h-12l-2-16 6-10zM580 388l8-5-1 5zM598 394l16 0v2zM617 394l13 0v2zM768 269l9 7-2 3zM803 258l6-3v6zM817 263l10 8-5 0zM808 281l6 3-2 4zM849 281l11 11-2 2zM867 295l5 5-3 2zM789 300l11 10-4 1zM770 299l9 9-4 2zM760 321l5 2-2 3zM723 321l6 1-3 4zM747 261l6-2-1 6zM719 288l4 4-3 2zM759 359l4 2-2 3zM884 320l5 2-3 3zM721 258l4 3-3 2zM708 362l6 3-5 1zM696 367l8-4 0 4z"/>
            <path d="M680 636l10 7-3 4zM699 640l5 12-4 0zM709 641l8 8-6-1zM740 640l9 12-5-2zM774 639l13 4-6 6zM787 640l13 15-8-3zM802 645l12 5-9 5zM820 645l16-6-6 10-9 3zM653 626l16 12-5 3z"/>
            <path d="M559 450l8 22-6 0z"/>
          </g>
          <path d="M722 409l-3-1-12-1 1 4M733 409q4-5 3-14 0-4 5-3l4 1 5 6 10 1 6-1 12-2 5-3 4 3 6 0 7 3 12-4 4 1q6 4 4 8l-4 5" fill="none" stroke="#222" stroke-width="1.500" stroke-dasharray="7 2"/>
        </g>
        <path d="M833.500 354.500v17M825 363h17" stroke="#e31a1c" stroke-width="4.500"/>
      </svg>
    </section>

    <section class="panel right">
      <div class="head"><span>NextGIS Connect</span><svg class="hb"><use href="#undock"/></svg><svg class="hb"><use href="#shut"/></svg></div>
      <div class="rtools">
        <svg class="ic" viewBox="-24.750 -28 49.500 56"><circle cx="-2" cy="0" r="12.500" fill="none" stroke="#6c9ac7" stroke-width="6.500"/><path d="M-3 3v-3h6l11 12v3H7z" fill="#6c9ac7" stroke="#efefef"/><path d="M2 0l8-9v5h8v8h-8v5z" fill="#19f02a" stroke="#1b3c57" stroke-width="1.600"/></svg>
        <svg class="ic" viewBox="-24.750 -28 49.500 56"><rect x="-23" y="-21" width="46" height="45" rx="3" fill="#dcdcdc" stroke="#b0b0b0" stroke-width="1.400"/><circle cx="-2" cy="0" r="12.500" fill="none" stroke="#6c9ac7" stroke-width="6.500"/><path d="M-3 3v-3h6l11 12v3H7z" fill="#6c9ac7" stroke="#dcdcdc"/><path d="M18 0l-8-9v5H2v8h8v5z" fill="#19f02a" stroke="#1b3c57" stroke-width="1.600"/><path d="M12 15h10l-5 5z" fill="#666"/></svg>
        <div class="sep s2"></div>
        <svg class="ic" viewBox="-24.750 -28 49.500 56"><path d="M-16-12H-5l3 3h17v8h-31z" fill="#1d3b5c"/><rect x="-16" y="-6" width="31" height="20" fill="#7297c6"/><path d="M9.500 2v15M2 9.500h15" stroke="#143f2c" stroke-width="6.500"/><path d="M9.500 3v13M3 9.500h13" stroke="#19f02a" stroke-width="3.500"/></svg>
        <svg class="ic" viewBox="-24.750 -28 49.500 56"><use href="#funnel" x="-14" y="-15" width="28" height="31"/></svg>
        <svg class="ic" viewBox="-24.750 -28 49.500 56"><path d="M10-6A12 12 0 1 0 12 3" fill="none" stroke="#34567f" stroke-width="5"/><path d="M10-6A12 12 0 1 0 12.200 2" fill="none" stroke="#7297c6" stroke-width="2.800"/><path d="M9-16l3 13-12-1z" fill="#7297c6" stroke="#34567f" stroke-width="1.200"/></svg>
        <div class="sep s3"></div>
        <svg class="ic" viewBox="-24.750 -28 49.500 56"><path d="M-14-9l8-5 9 5 8-5V-1M-14-9v24l8-5V-12M-6 10l4 2M3-8V0" fill="none" stroke="#c6c6c6" stroke-width="4"/><circle cx="7" cy="6" r="5" fill="#efefef" stroke="#c6c6c6" stroke-width="3"/><path d="M11 10l6 6" stroke="#c6c6c6" stroke-width="4"/></svg>
        <div class="sep s4"></div>
        <svg class="ic" viewBox="-24.250 -28 49.500 56"><circle r="14.500" fill="none" stroke="#34567f" stroke-width="4.500" stroke-dasharray="4.600 2.992"/><circle r="14" fill="none" stroke="#7297c6" stroke-width="3.500" stroke-dasharray="3.200 4.130" stroke-dashoffset="-.6"/><circle r="9.200" fill="none" stroke="#7297c6" stroke-width="8"/><circle r="5.200" fill="#efefef" stroke="#34567f" stroke-width="1.300"/></svg>
        <svg class="ic" viewBox="-23.250 -28 49.500 56"><path d="M-7-6q0-7 7-7 8 0 8 6 0 4-4 6.500Q0 2 0 7" fill="none" stroke="#34567f" stroke-width="6.500"/><path d="M-7-7q0-6 7-6 8 0 8 6 0 4-4 6.500Q0 2 0 6" fill="none" stroke="#7297c6" stroke-width="4.300"/><circle cy="13" r="3.500" fill="#7297c6" stroke="#34567f"/></svg>
      </div>
      <div class="rbox">
        <div class="rtree">
          <div class="rrow r0"><svg class="exp"><use href="#tri"/></svg><svg class="fo"><use href="#folder"/></svg></div>
          <div class="rrow r1"><svg class="exp"><use href="#tri"/></svg><span class="tail t1">z</span></div>
          <div class="rrow"><span class="tail t2">minutes</span></div>
          <div class="rrow"></div>
          <div class="rrow"><span class="tail t3">Graz</span></div>
          <div class="rrow r2 sel"><svg class="exp"><use href="#tri"/></svg><svg class="ve"><use href="#vec"/></svg><span>Ambulance stations</span></div>
          <div class="rrow r3"><svg class="br"><use href="#brush"/></svg><span>another style</span></div>
          <div class="rrow r3"><svg class="br"><use href="#brush"/></svg><span>Default style</span></div>
          <div class="rrow r2"><svg class="exp side"><use href="#tri"/></svg><svg class="ve"><use href="#vec"/></svg><span>Graz administrative border</span></div>
          <div class="rrow r2"><svg class="exp side"><use href="#tri"/></svg><svg class="ve"><use href="#vec"/></svg><span>Residential areas outside 15-minut...</span></div>
          <div class="rrow r1"><svg class="exp side"><use href="#tri"/></svg><svg class="fo"><use href="#folder"/></svg><span>Basemaps</span></div>
          <div class="rrow r1"><svg class="exp side"><use href="#tri"/></svg><svg class="fo"><use href="#folder"/></svg><span>Data</span></div>
        </div>
        <div class="vs rvs"><div class="sb up"><svg><use href="#tri"/></svg></div><div class="thumb"></div><div class="track"></div><div class="sb"><svg><use href="#tri"/></svg></div></div>
      </div>
      <svg class="splitdots s-right"><use href="#grip"/></svg>
    </section>
  </main>

  <footer class="status">
    <div class="locate"><svg viewBox="0 0 20 20"><circle cx="8" cy="8" r="6.500" fill="none" stroke="#999" stroke-width="1.800"/><path d="M12.500 12.500l6 6" stroke="#999" stroke-width="2.200"/></svg><span>Type to locate (Ctrl+K)</span></div>
    <span class="cut k1">d</span>
    <div class="field coord">1771400&nbsp; 5959659</div>
    <svg class="bug" viewBox="0 0 24 25"><path d="M1 7q2-7 8-7l3 8-6 6q-4-3-5-7z" fill="#111"/><path d="M4 4l3 6M8 2l2 7" stroke="#fff" stroke-width="1.600"/><ellipse cx="14" cy="16" rx="7.500" ry="7" fill="#eee" stroke="#111" stroke-width="2"/><circle cx="14" cy="17" r="3" fill="none" stroke="#111" stroke-width="1.600"/><path d="M8 13l6-5 2 4M13 6l3-3M17 5h5M0 15l4 1M4 20l4 1M20 9l2-1" stroke="#111" stroke-width="1.700" fill="none"/></svg>
    <span class="cut k2">a</span>
    <div class="field scale"><span>1:872120</span><div class="cbtn"><svg><use href="#tri"/></svg></div></div>
    <svg class="lock" viewBox="0 0 19 23"><path d="M4 12V7q0-5 5.500-5T15 7v5" fill="none" stroke="#777" stroke-width="3.400"/><path d="M4 12V7q0-5 5.500-5T15 7v5" fill="none" stroke="#e8e8e8" stroke-width="1"/><rect y="11" width="19" height="12" rx="2" fill="#5c5c5c"/></svg>
    <span class="cut k3">r</span>
    <div class="field mag"><span>100%</span><div class="spin"><svg class="flip"><use href="#tri"/></svg><svg><use href="#tri"/></svg></div></div>
    <span class="cut k4">a</span>
    <div class="field rot"><span>0,0 °</span><div class="spin"><svg class="flip"><use href="#tri"/></svg><svg><use href="#tri"/></svg></div></div>
    <svg class="cb rcb"><use href="#tick"/></svg><span class="render">Render</span>
    <svg class="gl" viewBox="0 0 24 21"><path d="M5 1h14l5 8-2 4q-4 7-10 7.500Q5 20 2 13L0 9z" fill="#777"/><path d="M0 8.500h24M2 13h20M6 17h12M12 2v19M7 3q-3 10 2 17M17 3q3 10-2 17" stroke="#e8e8e8" fill="none"/></svg>
    <span class="epsg">EPSG:3857</span>
    <svg class="bubble" viewBox="0 0 25 23"><ellipse cx="12.500" cy="10" rx="12.200" ry="10" fill="#606060"/><path d="M13 18l10 5-3-8z" fill="#606060"/></svg>
    <svg class="size" viewBox="0 0 15 15"><path d="M14 1v14M9.500 5.500V15M5 10v5M.8 14v1" stroke="#bbb" stroke-width="2" stroke-dasharray="2 2.500"/></svg>
  </footer>

  <div class="frame f-layer"></div>

  <div class="popup"><div>Upload selected</div><div>Upload all</div><div>Update layer style</div><div>Add new style to layer</div></div>
  <div class="frame f-menu"></div>

  <div class="dialog">
    <div class="dhead"><svg class="logo" viewBox="0 0 24 23"><use href="#q"/></svg><span>Choose style</span><svg class="dx" viewBox="0 0 16 16"><path d="M.5.5l15 15M15.500.5l-15 15" stroke="#555" stroke-width="1.300"/></svg></div>
    <div class="dlist">
      <div class="ditem sel"><svg class="br"><use href="#brush"/></svg><span>another style</span></div>
      <div class="ditem"><svg class="br"><use href="#brush"/></svg><span>Default style</span></div>
    </div>
    <div class="dfoot"><button class="ok" type="button">OK</button></div>
  </div>

  <svg class="arrow" viewBox="980 410 220 95"><g fill="#d05045"><circle cx="1190.500" cy="426" r="7.500"/><circle cx="1161.500" cy="434.500" r="7.500"/><circle cx="1133" cy="443" r="7.500"/><circle cx="1104" cy="451.500" r="7.500"/><circle cx="1075" cy="459.500" r="7.500"/><circle cx="1046.500" cy="468" r="7.500"/><circle cx="1017.500" cy="476.500" r="7.500"/></g><path d="M1002 469q-6 2-12.500 13.500 5 7 14 12.500" fill="none" stroke="#d05045" stroke-width="9.500" stroke-linecap="round" stroke-linejoin="round"/></svg>
</div>
</body>
</html>
```
FILE: styles.css
```css
* { box-sizing: border-box; }
body { margin: 0; background: #efefef; }
svg { display: block; flex: none; }
.defs { position: absolute; }
.window {
  position: relative; width: 1572px; height: 707px; overflow: hidden;
  background: #efefef; color: #1a1a1a;
  font: 18px/27px "Open Sans", "Noto Sans", sans-serif; letter-spacing: -.48px;
  white-space: nowrap; display: flex; flex-direction: column;
}
.window::after { content: ""; position: absolute; left: 0; top: 0; width: 1px; height: 100%; background: #8b99a8; }
.titlebar { height: 44px; background: #fff; border-top: 1px solid #2c3f58; display: flex; align-items: center; padding-left: 12px; flex: none; }
.logo { width: 24px; height: 23px; }
.titlebar .logo { margin-top: -3px; }
.title { margin-left: 5px; flex: 1; letter-spacing: -.55px; padding-top: 1px; }
.winbtns { width: 160px; height: 20px; margin-right: 22px; margin-top: -1px; }
.menubar {
  height: 32px; flex: none; padding-left: 15.5px; line-height: 32px; border-bottom: 2px solid #d6d6d6;
  display: grid; grid-template-columns: 76px 52px 60px 63px 86px 80px 71px 71px 96px 58px 65px 106px 40px;
}
.menubar u { text-underline-offset: 3px; text-decoration-thickness: 1.2px; }

.toolbar { display: flex; align-items: center; flex: none; background: linear-gradient(#fafafa, #eee); }
.bar1 { height: 58px; border-bottom: 2px solid #b9b9b9; }
.bar2 { height: 58px; border-bottom: 2px solid #b4b4b4; }
.bar3 { height: 57px; border-bottom: 2px solid #b9b9b9; }
.ic { width: 49.5px; height: 56px; }
.grip { flex: none; padding-left: 12px; }
.grip svg { width: 8px; height: 26px; }
.grip.first { width: 19px; padding-left: 8px; }
.g1 { width: 24.75px; }
.g2 { width: 24.5px; }
.g3 { width: 21px; padding-left: 9px; }
.g4 { width: 24.5px; }
.g5 { width: 21.75px; }
.g6 { width: 20px; padding-left: 9px; }
.g7 { width: 25.5px; }
.g8 { width: 22px; padding-left: 10px; }
.g9 { width: 22px; }
.drop { flex: none; padding-left: 1px; color: #5a5a5a; }
.drop svg { width: 12px; height: 7px; }
.d1 { width: 17.5px; }
.d2 { width: 19.5px; }
.d3 { width: 16.5px; }
.d4 { width: 20.5px; }
.e1, .e2 { width: 18px; padding-left: 2px; color: #9a9a9a; }
.more { width: 12px; height: 10px; margin-left: 7px; margin-top: 2px; }
.m2 { margin: 2px 4px 0 9px; }
.sep { width: 2px; height: 29px; background: #d8d8d8; flex: none; }
.s1 { margin: 0 4px 0 6px; }
.connect { width: 48px; height: 46px; margin: 2px 0 0 1.5px; border: 1.5px solid #ababab; border-radius: 3px; background: #dcdcdc; display: flex; align-items: center; justify-content: center; }
.connect svg { width: 37px; height: 37px; margin-top: -2px; }
.faded { opacity: .4; filter: grayscale(.8); }
.glyph { font-family: "Open Sans", sans-serif; letter-spacing: 0; }
.bold { font-weight: 700; letter-spacing: -.2px; }
.info { font-family: "Liberation Serif", serif; font-style: italic; font-weight: 700; fill: #fff; }
.serif { font-family: "Liberation Serif", serif; }
.eps { font-family: "DejaVu Sans", sans-serif; fill: #6b3f7c; }

.work { display: grid; grid-template-columns: 411px 705px 456px; height: 412px; flex: none; }
.panel { position: relative; display: flex; flex-direction: column; min-width: 0; }
.head { height: 34px; display: flex; align-items: center; gap: 4px; }
.head span { flex: 1; padding-top: 1px; }
.hb { width: 17px; height: 17px; margin-top: -2px; }
.left .head { padding: 0 11px 0 7px; }
.right .head { padding: 0 1px 0 16px; }
.ptools { display: flex; align-items: center; height: 43px; padding: 0 0 4px 5px; }
.pi { width: 37.5px; height: 40px; }
.p1 { width: 18px; padding-left: 2px; }
.treebox { height: 271px; width: 399.5px; margin-left: 2px; border-top: 1.5px solid #bbb; background: #fff; display: flex; }
.ltree { width: 378px; height: 269px; overflow: hidden; flex: none; padding-top: 1px; }
.row { position: relative; height: 27px; display: flex; align-items: center; }
.row.l1 { padding-left: 65px; }
.row.l0 { padding-left: 10px; }
.row.open { padding-left: 40px; }
.row.cur { background: #efefef; }
.exp { width: 12px; height: 7px; color: #5a5a5a; }
.exp.side { transform: rotate(-90deg); }
.row .exp { margin-right: 13px; }
.cb { width: 20px; height: 20px; }
.row .cb { margin-right: 10px; }
.sym { width: 24px; height: 24px; margin-right: 8.500px; }
.name { overflow: hidden; flex: 1; padding-top: 1px; }
.name.b { font-weight: 700; color: #000; letter-spacing: -.72px; }
.name u { text-underline-offset: 3px; }
.sy { position: absolute; left: 344px; top: 1px; width: 25px; height: 25px; }
.leg { height: 46.5px; display: flex; align-items: center; padding-left: 95px; }
.sw { width: 43.5px; height: 42.5px; margin: 0 9px 0 10px; }
.c1 { background: #f7fbff; }
.c2 { background: #dfe9f5; }
.c3 { background: #b8d7ea; }
.vs { flex: 1; display: flex; flex-direction: column; border-left: 1px solid #ddd; color: #5a5a5a; }
.sb { height: 20px; background: #fbfbfb; display: flex; align-items: center; justify-content: center; flex: none; }
.sb svg { width: 12px; height: 7px; }
.sb.up { border-bottom: 1.5px solid #bbb; }
.sb.up svg, .flip { transform: scaleY(-1); }
.thumb { flex: 1; background: linear-gradient(90deg, #f2f2f2, #fff); }
.track { height: 63px; background: #e4e4e4; border: 1px solid #bcbcbc; border-left: 0; flex: none; }
.hs { height: 22px; width: 399.5px; margin-left: 2px; border-top: 1px solid #bbb; border-bottom: 2px solid #bbb; display: flex; }
.hb2 { width: 20px; background: #fafafa; border-right: 1.5px solid #bbb; padding: 4px 0 0 6px; }
.hb2 svg { width: 7px; height: 12px; }
.hb2.r { border-left: 1.5px solid #bbb; border-right: 0; width: 22px; }
.hthumb { width: 199px; background: linear-gradient(#fff, #f2f2f2); border-right: 1px solid #bbb; }
.htrack { flex: 1; background: #e4e4e4; }
.corner { width: 21px; border-left: 1px solid #ccc; }
.tabs { display: flex; align-items: flex-start; margin-left: 1px; font: 20px/40px "DejaVu Sans Condensed", "DejaVu Sans", sans-serif; color: #000; letter-spacing: .2px; }
.tab { width: 111px; height: 38px; padding-left: 17px; background: #dcdcdc; border: 1.5px solid #b8b8b8; border-top: 0; border-radius: 0 0 3px 3px; }
.tab.on { width: 96px; height: 41px; line-height: 44px; padding-left: 16px; background: linear-gradient(#f3f3f3, #fbfbfb); }
.splitdots { position: absolute; width: 8px; height: 26px; top: 196px; clip-path: inset(0 4px 0 0); opacity: .8; }
.s-left { left: 407px; }
.s-right { left: 5px; }

.canvas { background: #fff; border-top: 2px solid #c6c6c6; border-left: 2px solid #cfcfcf; border-right: 1px solid #ddd; }
.map { width: 703px; height: 410px; }

.rtools { height: 54px; display: flex; align-items: center; padding: 0 0 4px 14px; margin-bottom: 1px; }
.rtools .sep { background: #fbfbfb; border-right: 1px solid #ddd; width: 3px; }
.s2 { margin: 0 4px 0 5px; }
.s3 { margin: 0 3px 0 4px; }
.s4 { margin: 0 3px 0 5px; }
.rbox { flex: 1; margin-left: 10px; border-top: 1.5px solid #bbb; border-left: 1.5px solid #bbb; background: #fff; display: flex; height: 323px; min-height: 0; overflow: hidden; }
.rtree { width: 424px; flex: none; overflow: hidden; padding-top: 1px; }
.rrow { height: 27px; display: flex; align-items: center; }
.rrow span { padding-top: 1px; }
.rrow .exp { margin-right: 13px; }
.r0 { padding-left: 9px; }
.r1 { padding-left: 39px; }
.r2 { padding-left: 69px; }
.r3 { padding-left: 125px; }
.fo { width: 25px; height: 20px; margin-right: 9px; }
.ve { width: 25px; height: 25px; margin-right: 8px; }
.br { width: 25px; height: 21px; margin-right: 7px; margin-top: -3px; }
.t1 { margin-left: 257px; }
.t2 { margin-left: 312px; }
.t3 { margin-left: 325px; }
.sel { background: linear-gradient(90deg, #0078d7 35%, #1a88dd); color: #d9edff; }
.sel .exp { color: #123; }
.sel .ve, .sel .br { opacity: .7; }
.rvs .thumb { flex: none; height: 128px; border-bottom: 1px solid #aaa; }
.rvs .track { flex: 1; border-top: 0; }
.rvs .sb { width: 20px; }

.status { height: 46px; flex: none; display: flex; align-items: center; padding: 3px 0 0 7px; color: #000; font: 19px/30px "DejaVu Sans Condensed", "DejaVu Sans", sans-serif; letter-spacing: -.15px; position: relative; }
.locate { width: 382px; height: 37px; border: 1.5px solid #b0b0b0; border-radius: 3px; background: #fff; display: flex; align-items: center; padding-left: 12px; color: #808080; font-size: 20px; letter-spacing: .42px; flex: none; }
.locate svg { width: 20px; height: 20px; margin-right: 10px; margin-top: -3px; }
.cut { overflow: hidden; display: flex; justify-content: flex-end; flex: none; font-size: 18px; }
.k1 { width: 7px; margin-left: 65.5px; }
.k2 { width: 6px; margin-left: 20px; }
.k3 { width: 8px; margin-left: 12px; }
.k4 { width: 7px; margin-left: 12px; }
.field { height: 36px; border: 1.5px solid #b0b0b0; border-radius: 3px; background: #fff; display: flex; align-items: center; flex: none; padding-top: 1px; }
.coord { width: 184px; margin-left: 4px; padding-left: 9.5px; }
.bug { width: 24px; height: 25px; margin-left: 7px; }
.scale { width: 143px; margin-left: 5px; padding-left: 4px; justify-content: space-between; padding-top: 0; }
.cbtn { width: 32px; height: 100%; border-left: 1.5px solid #b8b8b8; display: flex; align-items: center; justify-content: center; background: linear-gradient(#fff, #f1f1f1); color: #5a5a5a; }
.cbtn svg { width: 12px; height: 7px; }
.lock { width: 19px; height: 23px; margin-left: 17px; }
.mag { width: 138px; margin-left: 4px; padding-left: 5px; justify-content: space-between; padding-top: 0; }
.spin { width: 22px; height: 100%; border-left: 1.5px solid #b8b8b8; display: flex; flex-direction: column; gap: 8px; align-items: center; justify-content: center; background: #f7f7f7; color: #5a5a5a; }
.spin svg { width: 12px; height: 7px; }
.rot { width: 138px; margin-left: 13px; padding-left: 5px; justify-content: space-between; padding-top: 0; }
.rcb { margin-left: 9px; }
.render { margin-left: 8px; width: 84px; }
.gl { width: 24px; height: 21px; margin-top: -2px; }
.epsg { margin-left: 2px; width: 133px; letter-spacing: .25px; }
.bubble { width: 25px; height: 23px; }
.size { position: absolute; right: 0; bottom: 0; width: 15px; height: 15px; }

.frame { position: absolute; border: 5px solid #d05045; border-radius: 2px; }
.f-layer { left: 54px; top: 346px; width: 331px; height: 42px; }
.f-menu { left: 1205px; top: 405px; width: 181px; height: 38px; }
.popup { position: absolute; left: 1181px; top: 332px; width: 268px; height: 143px; background: #fff; border: 1.5px solid #909090; box-shadow: 3px 3px 3px rgba(0,0,0,.45); padding-left: 40.5px; line-height: 35.8px; letter-spacing: -.4px; }
.dialog { position: absolute; left: 562.5px; top: 409px; width: 421px; height: 231.5px; border: 1.5px solid #6c6c6c; background: #efefef; box-shadow: 2px 6px 18px rgba(0,0,0,.38); }
.dhead { height: 44px; background: #fff; display: flex; align-items: center; padding: 0 18px 0 11px; }
.dhead span { flex: 1; margin-left: 6px; padding-top: 1px; }
.dx { width: 16px; height: 16px; margin-top: -1px; }
.dlist { margin: 17.500px 18.500px 0 17.500px; height: 103px; background: #fff; border: 1.5px solid #c0c0c0; border-left-color: #eee; border-top-color: #eee; }
.ditem { height: 27px; display: flex; align-items: center; padding-left: 36px; letter-spacing: -.4px; }
.ditem span { padding-top: 2px; }
.dfoot { display: flex; justify-content: flex-end; padding: 10.5px 18px 0 0; }
.ok { width: 120px; height: 37px; border: 1.5px solid #58b1f5; border-radius: 3px; background: linear-gradient(#fff, #e4e8ec); font: 21px "DejaVu Sans Condensed", "DejaVu Sans", sans-serif; color: #000; padding: 2px 0 0; }
.arrow { position: absolute; left: 980px; top: 410px; width: 220px; height: 95px; }
```
